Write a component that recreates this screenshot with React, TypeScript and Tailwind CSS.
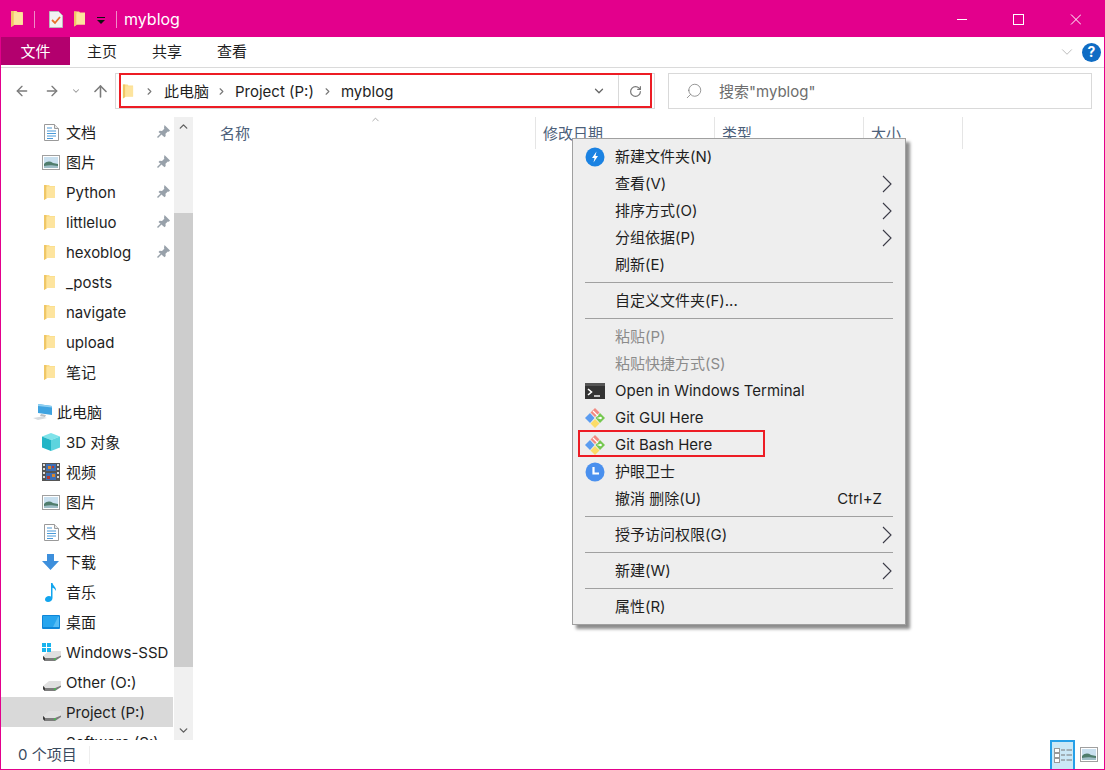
import { ArrowLeft, ArrowRight, ArrowUp, ChevronDown, ChevronRight, ChevronUp, RotateCw, Search } from 'lucide-react';
import type { ReactNode } from 'react';

function FolderIcon({ className = 'ml-px w-[13px] h-[17px]' }: { className?: string }) {
  return (
    <svg viewBox="0 0 13 17" className={className}>
      <path d="M1 1h5l1 1h5v12H4l-3 2z" fill="#fcdf8e" />
      <path d="M1 1h2.500v13.500L1 16z" fill="#f0c766" />
      <path d="M3.500 3H12v11H3.500z" fill="#fde49e" />
    </svg>
  );
}

function DocIcon() {
  return (
    <svg viewBox="0 0 15 17" className="ml-[2px] w-[15px] h-[17px]">
      <path d="M.5.5h10l4 4v12H.5z" fill="#fff" stroke="#9a9a9a" />
      <path d="M10.500.5v4h4" fill="#e8e8e8" stroke="#9a9a9a" />
      <path d="M3 4h5M3 7h9M3 9.500h9M3 12h9M3 14.500h6" stroke="#4a9ad8" strokeWidth="1" />
    </svg>
  );
}

function PictureIcon() {
  return (
    <svg viewBox="0 0 18 15" className="w-[18px] h-[15px]">
      <rect x=".5" y=".5" width="17" height="14" fill="#fff" stroke="#a0a0a0" />
      <rect x="2" y="2" width="14" height="11" fill="#c9e0ef" />
      <path d="M2 9c3-3 6-3 9-1l5 1v4H2z" fill="#4f7d6c" />
      <path d="M2 11c4-1 8-1 14 0v2H2z" fill="#9dbdc6" />
    </svg>
  );
}

function DriveIcon({ windows = false }: { windows?: boolean }) {
  return (
    <svg viewBox="0 0 20 18" className="w-[20px] h-[18px]">
      <path d="M1 13l6-5h12v4.500L13 15H3z" fill="#e0e0e0" />
      <path d="M1 13l2 2h10l6-2.500V14l-6 4H3l-2-2z" fill="#7c7c7c" />
      <path d="M1 13l2 2v3l-2-2z" fill="#3c3c3c" />
      <circle cx="13" cy="16.200" r="1" fill="#3fc24a" />
      {windows && (
        <g fill="#18b4ee">
          <rect x="0" y="0" width="4" height="4" />
          <rect x="5" y="0" width="4" height="4" />
          <rect x="0" y="5" width="4" height="4" />
          <rect x="5" y="5" width="4" height="4" />
        </g>
      )}
    </svg>
  );
}

function PinIcon() {
  return (
    <svg viewBox="0 0 13 13" className="w-[13px] h-[13px]">
      <path d="M7.500 0l5.500 5.500-1.200 1.200-1-.3-2.300 2.300.2 2.300-1.200 1.200L1.500 7l1.200-1.200 2.300.2 2.300-2.300-.3-1z" fill="#98a1aa" />
      <path d="M4 9L.5 12.500" stroke="#98a1aa" strokeWidth="1.400" />
    </svg>
  );
}

function PcIcon() {
  return (
    <svg viewBox="0 0 22 18" className="w-[22px] h-[18px]">
      <path d="M6 1l14 2v9L6 10z" fill="#3fa3e0" />
      <path d="M6 1l14 2v1.500L6 3z" fill="#8fd0f2" />
      <path d="M9 11l5 1-1 2-5-1z" fill="#b9bec4" />
      <path d="M1 15l9-1.500 5 1.500-9 2z" fill="#d6dade" />
    </svg>
  );
}

function CubeIcon() {
  return (
    <svg viewBox="0 0 18 18" className="w-[18px] h-[18px]">
      <path d="M9 0l9 3.500-9 3.500L0 3.500z" fill="#7fe3ea" />
      <path d="M0 3.500l9 3.500v11l-9-3.500z" fill="#22b5c6" />
      <path d="M18 3.500L9 7v11l9-3.500z" fill="#5dd4de" />
    </svg>
  );
}

function FilmIcon() {
  return (
    <svg viewBox="0 0 18 18" className="w-[18px] h-[18px]">
      <rect width="18" height="18" fill="#555" />
      <path d="M1 1h2v2H1zM1 5h2v2H1zM1 9h2v2H1zM1 13h2v2H1zM15 1h2v2h-2zM15 5h2v2h-2zM15 9h2v2h-2zM15 13h2v2h-2z" fill="#ddd" />
      <rect x="4" y="1" width="10" height="7" fill="#3d6fb5" />
      <rect x="4" y="10" width="10" height="7" fill="#3d6fb5" />
      <path d="M6 3h3v3H6zM10 11h3v3h-3z" fill="#d9872e" />
      <path d="M10 3h2v2h-2zM5 13h3v3H5z" fill="#b4382e" />
    </svg>
  );
}

function DownloadIcon() {
  return (
    <svg viewBox="0 0 17 16" className="w-[17px] h-[16px]">
      <path d="M5 0h7v7h5l-8.500 9L0 7h5z" fill="#3d8fdc" />
    </svg>
  );
}

function MusicIcon() {
  return (
    <svg viewBox="0 0 12 19" className="ml-[3px] w-[12px] h-[19px]">
      <path d="M6 0h1.500c.5 3 4 4 3.500 8-.8-2-2.500-3-3.500-3.200V15c0 2.500-2.300 4-4.500 4C1.200 19 0 18 0 16.500 0 14.500 2 13 4 13c.8 0 1.500.2 2 .5z" fill="#12a5ee" />
    </svg>
  );
}

function DesktopIcon() {
  return (
    <svg viewBox="0 0 18 14" className="w-[18px] h-[14px]">
      <rect width="18" height="14" rx="1" fill="#0e86d8" />
      <rect x="1" y="1" width="16" height="11" fill="#27a5ee" />
      <path d="M11 12l5-10h1v10z" fill="#56bdf5" />
    </svg>
  );
}

function GitIcon() {
  return (
    <svg viewBox="0 0 20 20" className="w-[20px] h-[20px]">
      <path d="M10 0l4.500 4.500L10 9 5.500 4.500z" fill="#f28a82" />
      <path d="M15 5l5 5-5 5-4.500-5z" fill="#76c850" />
      <path d="M10 11l4.500 4.500L10 20l-4.500-4.500z" fill="#fbdc68" />
      <path d="M5 5l4.500 5L5 15l-5-5z" fill="#5b9cf0" />
      <path d="M8 3l5 5M12.500 10h2.500" stroke="#fff" strokeWidth="1.200" />
      <circle cx="15.500" cy="10" r="1.300" fill="#fff" />
    </svg>
  );
}

function BlueBoltIcon() {
  return (
    <svg viewBox="0 0 20 20" className="w-[20px] h-[20px]">
      <circle cx="10" cy="10" r="9.500" fill="#1a82e2" />
      <path d="M11.500 4.500L7 11h2.500L8.500 15.500 13 9h-2.500z" fill="#fff" />
    </svg>
  );
}

function EyeGuardIcon() {
  return (
    <svg viewBox="0 0 20 20" className="w-[20px] h-[20px]">
      <circle cx="10" cy="10" r="9.500" fill="#4a90ee" />
      <path d="M8.500 5v6.500H14" fill="none" stroke="#fff" strokeWidth="2.200" />
    </svg>
  );
}

function TerminalIcon() {
  return (
    <svg viewBox="0 0 20 16" className="w-[20px] h-[16px]">
      <rect width="20" height="16" fill="#333333" />
      <rect width="20" height="3" fill="#555555" />
      <path d="M3 6l3.500 3L3 12" fill="none" stroke="#fff" strokeWidth="1.600" />
      <path d="M9 13h6" stroke="#fff" strokeWidth="1.400" />
    </svg>
  );
}

function SubArrow() {
  return (
    <svg viewBox="0 0 10 18" className="w-[10px] h-[18px]">
      <path d="M1 1l8 8-8 8" fill="none" stroke="#3a3a46" strokeWidth="1.100" />
    </svg>
  );
}

type NavRow = { label: string; icon: ReactNode; pin?: boolean; active?: boolean };

const quick: NavRow[] = [
  { label: '文档', icon: <DocIcon />, pin: true },
  { label: '图片', icon: <PictureIcon />, pin: true },
  { label: 'Python', icon: <FolderIcon />, pin: true },
  { label: 'littleluo', icon: <FolderIcon />, pin: true },
  { label: 'hexoblog', icon: <FolderIcon />, pin: true },
  { label: '_posts', icon: <FolderIcon /> },
  { label: 'navigate', icon: <FolderIcon /> },
  { label: 'upload', icon: <FolderIcon /> },
  { label: '笔记', icon: <FolderIcon /> },
];

const pc: NavRow[] = [
  { label: '3D 对象', icon: <CubeIcon /> },
  { label: '视频', icon: <FilmIcon /> },
  { label: '图片', icon: <PictureIcon /> },
  { label: '文档', icon: <DocIcon /> },
  { label: '下载', icon: <DownloadIcon /> },
  { label: '音乐', icon: <MusicIcon /> },
  { label: '桌面', icon: <DesktopIcon /> },
  { label: 'Windows-SSD', icon: <DriveIcon windows /> },
  { label: 'Other (O:)', icon: <DriveIcon /> },
  { label: 'Project (P:)', icon: <DriveIcon />, active: true },
  { label: 'Software (S:)', icon: <DriveIcon /> },
];

function SideRow({ row }: { row: NavRow }) {
  return (
    <div className={`relative flex h-[30px] w-[172px] shrink-0 items-center pl-[40px] ${row.active ? 'bg-[#d9d9d9]' : ''}`}>
      <span className="flex w-[25px] shrink-0 items-center justify-start pl-px">{row.icon}</span>
      <span className="whitespace-nowrap">{row.label}</span>
      {row.pin && (
        <span className="absolute right-[3px] top-[8px]">
          <PinIcon />
        </span>
      )}
    </div>
  );
}

function MenuItem({ label, icon, arrow, hint, disabled }: { label: string; icon?: ReactNode; arrow?: boolean; hint?: string; disabled?: boolean }) {
  return (
    <div className={`flex h-[27px] items-center ${disabled ? 'text-[#8b8b8b]' : 'text-[#1e1e1e]'}`}>
      <span className="flex w-[42px] shrink-0 items-center justify-center pl-[2px]">{icon}</span>
      <span className="flex-1 whitespace-nowrap">{label}</span>
      {hint && <span className="mr-[23px]">{hint}</span>}
      {arrow && (
        <span className="mr-[13px]">
          <SubArrow />
        </span>
      )}
    </div>
  );
}

function MenuSep() {
  return (
    <div className="flex h-[9px] items-center pl-[12px] pr-[12px]">
      <div className="h-px w-full bg-[#a0a0a0]" />
    </div>
  );
}

function ContextMenu() {
  return (
    <div className="absolute left-[571px] top-[137px] w-[334px] border border-[#a0a0a0] bg-[#eeeeee] py-[4px] shadow-[4px_4px_3px_rgba(0,0,0,0.45)]">
      <MenuItem label="新建文件夹(N)" icon={<BlueBoltIcon />} />
      <MenuItem label="查看(V)" arrow />
      <MenuItem label="排序方式(O)" arrow />
      <MenuItem label="分组依据(P)" arrow />
      <MenuItem label="刷新(E)" />
      <MenuSep />
      <MenuItem label="自定义文件夹(F)..." />
      <MenuSep />
      <MenuItem label="粘贴(P)" disabled />
      <MenuItem label="粘贴快捷方式(S)" disabled />
      <MenuItem label="Open in Windows Terminal" icon={<TerminalIcon />} />
      <MenuItem label="Git GUI Here" icon={<GitIcon />} />
      <MenuItem label="Git Bash Here" icon={<GitIcon />} />
      <MenuItem label="护眼卫士" icon={<EyeGuardIcon />} />
      <MenuItem label="撤消 删除(U)" hint="Ctrl+Z" />
      <MenuSep />
      <MenuItem label="授予访问权限(G)" arrow />
      <MenuSep />
      <MenuItem label="新建(W)" arrow />
      <MenuSep />
      <MenuItem label="属性(R)" />
      <div className="absolute left-[5px] top-[291px] h-[27px] w-[187px] border-2 border-[#ed1c24]" />
    </div>
  );
}

function Crumb() {
  return <ChevronRight size={11} strokeWidth={2.500} className="text-[#777]" />;
}

export default function App() {
  return (
    <div className="relative flex h-[770px] w-[1105px] flex-col overflow-hidden border border-[#e3008c] bg-white text-[15px] leading-none text-[#1e1e1e] font-['Inter','Noto_Sans_CJK_SC',sans-serif]">
      {/* title bar */}
      <div className="flex h-[36px] shrink-0 items-center bg-[#e3008c] pl-[9px] text-white">
        <FolderIcon className="w-[14px] h-[18px]" />
        <div className="ml-[10px] h-[17px] w-px bg-[#f08cc8]" />
        <svg viewBox="0 0 14 17" className="ml-[14px] h-[17px] w-[14px]">
          <path d="M.5.5h9l4 4v12H.5z" fill="#f2f2f2" stroke="#bbb" />
          <path d="M3 9l3 3 5-6" fill="none" stroke="#e8702a" strokeWidth="1.800" />
        </svg>
        <FolderIcon className="ml-[10px] w-[13px] h-[18px]" />
        <svg viewBox="0 0 8 7" className="ml-[11px] mt-[3px] h-[7px] w-[8px]">
          <path d="M0 0h8v1H0zM0 3h8L4 7z" fill="#111" />
        </svg>
        <div className="ml-[11px] h-[17px] w-px bg-[#f08cc8]" />
        <span className="ml-[7px] text-[16px]">myblog</span>
        <svg viewBox="0 0 124 11" className="ml-auto mr-[23px] h-[11px] w-[124px]">
          <path d="M0 5.500h10" stroke="#fff" />
          <rect x="56.500" y=".5" width="10" height="10" fill="none" stroke="#fff" />
          <path d="M114 .5l10 10M124 .5l-10 10" stroke="#fff" />
        </svg>
      </div>

      {/* ribbon tabs */}
      <div className="flex h-[31px] shrink-0 border-b border-[#dadada] pb-[2px]">
        <div className="flex w-[69px] items-center justify-center bg-[#b3006e] text-white">文件</div>
        <div className="ml-[17px] flex items-center gap-[35px]">
          <span>主页</span>
          <span>共享</span>
          <span>查看</span>
        </div>
        <div className="ml-auto mr-[3px] flex items-center gap-[6px] pt-[2px]">
          <ChevronDown size={18} strokeWidth={1.200} className="text-[#b5b5b5]" />
          <span className="flex h-[19px] w-[19px] items-center justify-center rounded-full bg-[#0f6cc4] text-[14px] font-bold text-white">?</span>
        </div>
      </div>

      {/* address row */}
      <div className="flex h-[49px] shrink-0 items-start pt-[5px]">
        <div className="flex h-[36px] w-[114px] items-center pl-[13px] text-[#7b7b7b]">
          <ArrowLeft size={16} strokeWidth={2} />
          <ArrowRight size={16} strokeWidth={2} className="ml-[14px]" />
          <ChevronDown size={10} strokeWidth={2.500} className="ml-[11px] text-[#999]" />
          <ArrowUp size={19} strokeWidth={2} className="ml-[10px]" />
        </div>
        <div className="relative flex h-[36px] w-[540px] items-center border border-[#d9d9d9] pl-[6px]">
          <FolderIcon className="w-[12px] h-[17px]" />
          <span className="ml-[10px]"><Crumb /></span>
          <span className="ml-[9px]">此电脑</span>
          <span className="ml-[7px]"><Crumb /></span>
          <span className="ml-[8px]">Project (P:)</span>
          <span className="ml-[8px]"><Crumb /></span>
          <span className="ml-[8px]">myblog</span>
          <ChevronDown size={14} strokeWidth={2.200} className="ml-auto mr-[12px] text-[#666]" />
          <div className="flex h-full w-[36px] items-center justify-center border-l border-[#d9d9d9] pr-[3px]">
            <RotateCw size={13} strokeWidth={2.200} className="text-[#777]" />
          </div>
          <div className="absolute -left-px -top-px bottom-0 right-[2px] ml-[4px] border-2 border-[#ed1c24]" />
        </div>
        <div className="ml-[13px] flex h-[36px] w-[424px] items-center border border-[#d9d9d9] pl-[16px] text-[#6d6d6d]">
          <Search size={18} strokeWidth={1} className="-scale-x-100 text-[#777]" />
          <span className="ml-[16px]">搜索"myblog"</span>
        </div>
      </div>

      {/* body */}
      <div className="flex min-h-0 flex-1">
        <div className="flex w-[173px] shrink-0 flex-col overflow-hidden">
          {quick.map((row) => (
            <SideRow key={row.label} row={row} />
          ))}
          <div className="mt-[10px] flex h-[30px] shrink-0 items-center pl-[31px]">
            <span className="w-[25px] shrink-0"><PcIcon /></span>
            <span>此电脑</span>
          </div>
          {pc.map((row) => (
            <SideRow key={row.label} row={row} />
          ))}
        </div>
        <div className="flex w-[19px] shrink-0 flex-col bg-[#f0f0f0]">
          <div className="flex h-[19px] items-center justify-center">
            <ChevronUp size={13} strokeWidth={2.500} className="text-[#606060]" />
          </div>
          <div className="mt-[77px] h-[454px] bg-[#cdcdcd]" />
          <div className="mt-auto flex h-[19px] items-center justify-center">
            <ChevronDown size={13} strokeWidth={2.500} className="text-[#606060]" />
          </div>
        </div>

        <div className="relative flex-1">
          <div className="flex h-[32px] text-[#4c607a]">
            <div className="flex w-[343px] items-center border-r border-[#e5e5e5] pl-[27px]">名称</div>
            <div className="flex w-[179px] items-center border-r border-[#e5e5e5] pl-[7px]">修改日期</div>
            <div className="flex w-[149px] items-center border-r border-[#e5e5e5] pl-[7px]">类型</div>
            <div className="flex w-[99px] items-center border-r border-[#e5e5e5] pl-[7px]">大小</div>
          </div>
          <ChevronUp size={11} strokeWidth={1.500} className="absolute left-[177px] top-[-3px] text-[#888]" />
        </div>
      </div>

      {/* status bar */}
      <div className="flex h-[29px] shrink-0 items-center bg-white pl-[17px] text-[#3a4a5e]">
        <span>0 个项目</span>
        <div className="ml-[12px] h-[18px] w-px bg-[#eeeeee]" />
        <div className="ml-auto mr-[6px] flex items-center gap-[5px]">
          <div className="flex h-[29px] w-[25px] items-center justify-center border-2 border-b-0 border-[#26a0e8] bg-[#cbe8f6]">
            <svg viewBox="0 0 18 15" className="h-[15px] w-[18px]">
              <rect x=".5" y=".5" width="5" height="4" fill="#fff" stroke="#999" />
              <rect x=".5" y="5.500" width="5" height="4" fill="#fff" stroke="#999" />
              <rect x=".5" y="10.500" width="5" height="4" fill="#fff" stroke="#999" />
              <path d="M7 2h4M7 7h4M7 12h4M12.500 2H18M12.500 7H18M12.500 12H18" stroke="#777" />
            </svg>
          </div>
          <PictureIcon />
        </div>
      </div>

      <ContextMenu />
    </div>
  );
}
